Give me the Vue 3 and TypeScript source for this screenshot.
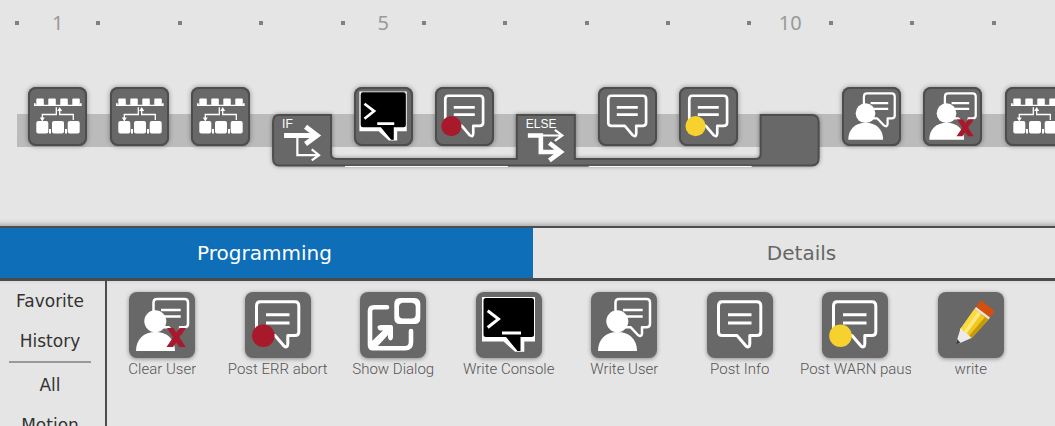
<script setup lang="ts">
import { ref } from 'vue'

type Icon = 'sub' | 'console' | 'error' | 'info' | 'warn' | 'user' | 'clear' | 'dialog' | 'pencil'

interface Step {
  column: number
  icon: Icon
  label: string
}

interface Command {
  icon: Icon
  label: string
}

const columns = 13
const labelled = [1, 5, 10]

const steps: Step[] = [
  { column: 1, icon: 'sub', label: 'Call subprogram' },
  { column: 2, icon: 'sub', label: 'Call subprogram' },
  { column: 3, icon: 'sub', label: 'Call subprogram' },
  { column: 5, icon: 'console', label: 'Write Console' },
  { column: 6, icon: 'error', label: 'Post ERR abort' },
  { column: 8, icon: 'info', label: 'Post Info' },
  { column: 9, icon: 'warn', label: 'Post WARN pause' },
  { column: 11, icon: 'user', label: 'Write User' },
  { column: 12, icon: 'clear', label: 'Clear User' },
  { column: 13, icon: 'sub', label: 'Call subprogram' },
]

const commands: Command[] = [
  { icon: 'clear', label: 'Clear User' },
  { icon: 'error', label: 'Post ERR abort' },
  { icon: 'dialog', label: 'Show Dialog' },
  { icon: 'console', label: 'Write Console' },
  { icon: 'user', label: 'Write User' },
  { icon: 'info', label: 'Post Info' },
  { icon: 'warn', label: 'Post WARN pause' },
  { icon: 'pencil', label: 'write' },
]

const tabs = ['Programming', 'Details']
const activeTab = ref('Programming')
</script>

<template>
  <div class="app">
    <svg class="defs" aria-hidden="true">
      <symbol id="sub" viewBox="0 0 59 59">
        <g fill="#fff">
          <path d="M6 16.300h1.700v1.500h44.300v-1.500h1.700v2.800H6z" />
          <rect x="8.300" y="11.500" width="7.500" height="7.500" rx="1" />
          <rect x="20.300" y="11.500" width="7.500" height="7.500" rx="1" />
          <rect x="32.300" y="11.500" width="7.500" height="7.500" rx="1" />
          <rect x="44.300" y="11.500" width="7.500" height="7.500" rx="1" />
          <rect x="8.300" y="34" width="12" height="12.500" rx="2" />
          <rect x="24" y="34" width="12" height="12.500" rx="2" />
          <rect x="39.700" y="34" width="12" height="12.500" rx="2" />
          <path d="M21 42h2v4.500h-2zM37 42h2v4.500h-2zM11.800 30.500h5l-2.500 4zM29.200 24h5l-2.500-4z" />
        </g>
        <path d="M28.300 20.300v7.200h-14v4M45.300 33v-5.500H31.700v-5" fill="none" stroke="#fff" stroke-width="1.300" />
      </symbol>

      <symbol id="info" viewBox="0 0 66 66">
        <path
          d="M15 9.800H50Q53.800 9.800 53.800 14V40Q53.800 43.500 50 43.500H42.800V52Q42.500 56.500 39 54L30 43.500H15Q11.500 43.500 11.500 40V14Q11.500 9.800 15 9.800ZM21 22.700H44.500M21 31H44.500"
          fill="none" stroke="#fff" stroke-width="3" stroke-linejoin="round" />
      </symbol>

      <symbol id="error" viewBox="0 0 66 66">
        <use href="#info" />
        <circle cx="18.300" cy="43.700" r="11.300" fill="#a8192b" />
      </symbol>

      <symbol id="warn" viewBox="0 0 66 66">
        <use href="#info" />
        <circle cx="18.500" cy="43.700" r="11.300" fill="#f7d12e" />
      </symbol>

      <symbol id="user" viewBox="0 0 66 66">
        <path
          d="M28 7H55.500Q59 7 59 10.500V32Q59 35.200 55.500 35.200H51V41.500Q50.500 45.500 47 43L39.500 35.200H24.500V10.500Q24.500 7 28 7ZM32 18H51.700M32 24.400H51.700"
          fill="none" stroke="#fff" stroke-width="2.500" stroke-linejoin="round" />
        <circle cx="26.300" cy="29.300" r="11" fill="#fff" />
        <path d="M7 59C7 47 15 40 26.500 40S46 47 46 59Z" fill="#fff" />
      </symbol>

      <symbol id="clear" viewBox="0 0 66 66">
        <use href="#user" />
        <path d="M38 36h6.500l12.200 19h-6.500zM50.500 36h6.500L44 55h-6.500z" fill="#a8192b" />
      </symbol>

      <symbol id="console" viewBox="0 0 66 66">
        <path d="M6 5H59V49.500H48.300V59.800H39L27.500 49.500H6Z" fill="#fff" />
        <path d="M10 6H55.500Q58 6 58 8.500V42.500Q58 45 55.500 45H44.500V59H41.500L30 45H10Q7.500 45 7.500 42.500V8.500Q7.500 6 10 6Z" fill="#000" />
        <path d="M11.700 18.700L22.500 27L11.700 35.500M26 41H45" fill="none" stroke="#fff" stroke-width="3" />
      </symbol>

      <symbol id="dialog" viewBox="0 0 66 66">
        <path
          fill="#fff" fill-rule="evenodd"
          d="M40 6H54.500Q60.300 6.500 60.300 12V26Q60.300 32 54.500 32H40Q34.300 32 34.300 26V12Q34.300 6 40 6ZM43 10.700Q39 11 39 15V22.500Q39 26.500 43 26.500H51.500Q55.700 26.500 55.700 22.500V15Q55.700 11 51.500 10.700Z" />
        <path d="M27 15.200H14Q10 15.200 10 19V53Q10 56.300 13 56.300H45Q51 56.300 51 50V39" fill="none" stroke="#fff" stroke-width="4.600" stroke-linecap="round" />
        <path d="M17.500 34.500Q18 33 21 33H31Q33 33 33 35V45.500Q32.500 48.500 30 48.500Q28 48 28 45V43L16 56L10 56V51L23 38.500H20Q17.500 38 17.500 34.500Z" fill="#fff" />
      </symbol>

      <symbol id="pencil" viewBox="0 0 66 66">
        <path d="M42.700 8.300L56.700 19L52 25.500L38 15Z" fill="#d4500c" />
        <path d="M38 15L52 25.500L50.500 27.500L36.500 17Z" fill="#f2e6d8" />
        <path d="M36.500 17L50.500 27.500L33.700 46L22 37.500Z" fill="#f2c81c" />
        <path d="M36.500 17L40 19.600L25.200 40L22 37.500Z" fill="#fbd93f" />
        <path d="M40 19.600L43 22L28.300 42L25.200 40Z" fill="#ffe97c" />
        <path d="M47 25L50.500 27.500L33.700 46L31 44Z" fill="#c69b0b" />
        <path d="M22.700 36L25.500 39.500L28.500 41L33.500 46L21 51.500L18.500 49.500Z" fill="#eceaea" />
        <path d="M19 47L22.500 50.700L18.500 52Z" fill="#3f3f42" />
      </symbol>
    </svg>

    <section class="timeline" aria-label="Program timeline">
      <div class="ruler">
        <div v-for="n in columns" :key="n" class="tick">
          <span v-if="labelled.includes(n)">{{ n }}</span>
        </div>
      </div>

      <div class="lane">
        <svg class="branch" viewBox="0 0 550 58" role="img" aria-label="If else block">
          <path class="frame" d="M8 2H60V41Q60 46 66 46H246V2H304V46H485Q490 46 490 41V2H541Q548 2 548 9V45Q548 52.500 541 52.500H8Q2 52.500 2 45V9Q2 2 8 2Z" />
          <path d="M74 53.500H237M318 53.500H481" stroke="#fff" stroke-width="1" />
          <g fill="none" stroke="#fff">
            <path d="M13 22.500H44M34.500 13.700L46 22.500L34.500 31" stroke-width="5" />
            <path d="M26.300 23V42.200H47M40.700 36.500L48 42.200L40.700 47.500" stroke-width="2.200" />
            <path d="M257 22.500H270V39H288M278.500 30L290 39L278.500 47.500" stroke-width="4.600" />
            <path d="M270 22.500H291M284 17L291.500 22.500L284 28" stroke-width="2.200" />
          </g>
          <text x="11" y="15">IF</text>
          <text x="255" y="15">ELSE</text>
        </svg>
        <button
          v-for="step in steps" :key="step.column" type="button" class="node"
          :style="{ gridColumn: step.column }" :aria-label="step.label">
          <svg viewBox="0 0 66 66"><use :href="'#' + step.icon" /></svg>
        </button>
      </div>
    </section>

    <nav class="tabs">
      <button
        v-for="tab in tabs" :key="tab" type="button" class="tab"
        :class="{ active: tab === activeTab }" @click="activeTab = tab">{{ tab }}</button>
    </nav>

    <div class="workspace">
      <aside class="groups">
        <button type="button">Favorite</button>
        <button type="button">History</button>
        <hr>
        <button type="button">All</button>
        <button type="button">Motion</button>
      </aside>
      <main class="palette">
        <button v-for="command in commands" :key="command.label" type="button" class="command">
          <span class="tile"><svg viewBox="0 0 66 66"><use :href="'#' + command.icon" /></svg></span>
          <span class="name">{{ command.label }}</span>
        </button>
      </main>
    </div>
  </div>
</template>

<style>
html,
body,
#app {
  height: 100%;
}

body {
  margin: 0;
  overflow: hidden;
  background: #e5e5e5;
}
</style>

<style scoped>
.app {
  display: flex;
  flex-direction: column;
  height: 100%;
  overflow: hidden;
  background: #e5e5e5;
  font-family: "DejaVu Sans", Verdana, sans-serif;
}

button {
  margin: 0;
  padding: 0;
  border: 0;
  background: none;
  font: inherit;
  color: inherit;
  cursor: pointer;
}

.defs {
  position: absolute;
  width: 0;
  height: 0;
}

.timeline {
  flex: none;
  overflow: hidden;
  padding: 8px 0 55px 17px;
}

.ruler,
.lane {
  display: grid;
  grid-template-columns: repeat(13, 1fr);
  margin-right: -20px;
}

.tick {
  height: 30px;
  text-align: center;
  font: 20px/30px "Noto Sans", sans-serif;
  color: #999;
}

.tick::before {
  content: "";
  float: left;
  width: 4px;
  height: 4px;
  margin: 13px -2px 0 -2px;
  background: #808080;
}

.lane {
  margin-top: 49px;
  background: linear-gradient(#bbb, #bbb) 0 27px / 100% 33px no-repeat;
}

.node {
  grid-row: 1;
  justify-self: center;
  width: 59px;
  height: 59px;
  border-radius: 8px;
  background: #686868;
  box-shadow: inset 0 0 0 2px #4d4d4d, 0 0 5px #0006;
  z-index: 1;
}

.node svg,
.tile svg {
  display: block;
  width: 100%;
  height: 100%;
}

.branch {
  grid-row: 1;
  grid-column: 4 / 11;
  justify-self: center;
  width: calc(100% - 20px);
  margin-top: 26px;
  overflow: visible;
}

.frame {
  fill: #686868;
  stroke: #4d4d4d;
  stroke-width: 2;
  filter: drop-shadow(0 0 2px #0006);
}

.branch text {
  fill: #fff;
  font: 12px "Liberation Sans", Arial, sans-serif;
}

.tabs {
  flex: none;
  display: flex;
  margin: 0 -15px 0 -4px;
  border-top: 2px solid #4d4d4d;
  border-bottom: 3px solid #4a4a4a;
  box-shadow: 0 -2px 5px #0004;
}

.tab {
  flex: 1;
  height: 50px;
  font-size: 20px;
  color: #666;
}

.tab.active {
  background: #0e6eb8;
  color: #fff;
}

.workspace {
  flex: 1;
  display: flex;
  min-height: 0;
}

.groups {
  flex: none;
  box-sizing: border-box;
  width: 107px;
  padding-right: 5px;
  border-right: 2px solid #4d4d4d;
  overflow: hidden;
  color: #333;
}

.groups button {
  display: block;
  width: 100%;
  height: 40px;
  font-size: 17px;
}

.groups hr {
  margin: 0 9px 2px;
  border: 0;
  border-top: 2px solid #999;
}

.palette {
  flex: 1;
  display: grid;
  grid-template-columns: repeat(8, minmax(0, 1fr));
  gap: 5px;
  align-items: start;
  padding: 11px 29px 0 0;
}

.command {
  display: flex;
  flex-direction: column;
  align-items: center;
}

.tile {
  width: 66px;
  height: 66px;
  border-radius: 8px;
  background: #686868;
  box-shadow: 0 1px 4px #0006;
}

.name {
  max-width: 100%;
  overflow: hidden;
  white-space: nowrap;
  font: 300 15px/22px Roboto, sans-serif;
  color: #555;
}
</style>
